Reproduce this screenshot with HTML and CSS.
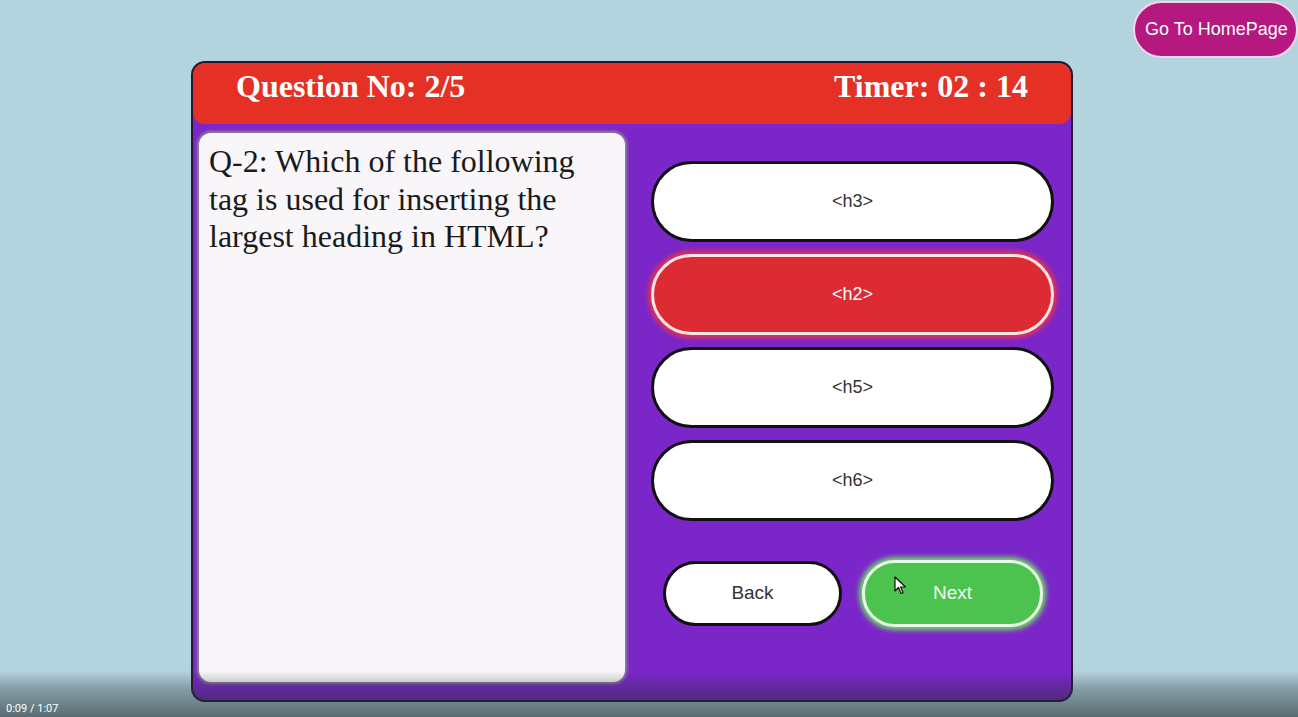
FILE: index.html
```html
<!DOCTYPE html>
<html>
<head>
<meta charset="utf-8">
<link rel="stylesheet" href="styles.css">
</head>
<body>
<div class="page">
  <div class="topbar">
    <button class="home-btn">Go To HomePage</button>
  </div>
  <div class="quiz">
    <div class="quiz-header">
      <span>Question No: 2/5</span>
      <span>Timer: 02 : 14</span>
    </div>
    <div class="quiz-body">
      <div class="question">Q-2: Which of the following tag is used for inserting the largest heading in HTML?</div>
      <div class="answers">
        <div class="options">
          <button class="option">&lt;h3&gt;</button>
          <button class="option selected">&lt;h2&gt;</button>
          <button class="option">&lt;h5&gt;</button>
          <button class="option">&lt;h6&gt;</button>
        </div>
        <div class="nav">
          <button class="nav-btn back">Back</button>
          <button class="nav-btn next">Next</button>
        </div>
      </div>
    </div>
  </div>
  <svg class="cursor" width="14" height="20" viewBox="0 0 14 20"><path d="M1 1 L1 15 L4.5 11.5 L7 17.5 L9 16.6 L6.6 11 L11.5 11 Z" fill="#fff" stroke="#111" stroke-width="1.2" stroke-linejoin="round"/></svg>
  <div class="player-shade"><span class="time">0:09 / 1:07</span></div>
</div>
</body>
</html>
```
FILE: styles.css
```css
* { box-sizing: border-box; }
html, body { margin: 0; padding: 0; }
body {
  width: 1298px;
  height: 717px;
  overflow: hidden;
  background: #b3d3de;
  font-family: "Liberation Sans", Arial, sans-serif;
}
.page {
  position: relative;
  width: 1298px;
  height: 717px;
}
.topbar {
  display: flex;
  justify-content: flex-end;
  height: 61px;
  padding-top: 1px;
  padding-right: 0;
}
.home-btn {
  width: 165px;
  height: 57px;
  border-radius: 29px;
  border: 2px solid #f3d6ea;
  background: #b5187f;
  color: #fff;
  font-family: "Liberation Sans", Arial, sans-serif;
  font-size: 18px;
  padding: 0 0 0 2px;
}
.quiz {
  margin-left: 191px;
  width: 882px;
  height: 641px;
  background: #7b26c9;
  border: 2px solid #231a2e;
  border-radius: 14px;
  overflow: hidden;
}
.quiz-header {
  height: 61px;
  background: #e53025;
  border-radius: 0 12px 12px 12px;
  display: flex;
  justify-content: space-between;
  align-items: center;
  padding: 0 43px 14px 43px;
  color: #fff;
  font-family: "Liberation Serif", "Times New Roman", serif;
  font-weight: bold;
  font-size: 32px;
}
.quiz-body {
  display: flex;
  padding: 9px 0 0 6px;
}
.question {
  width: 426px;
  height: 549px;
  background: #f8f6f9;
  border-radius: 12px;
  box-shadow: 0 0 3px 2px #8d8796;
  padding: 10px 10px;
  font-family: "Liberation Serif", "Times New Roman", serif;
  font-size: 32px;
  line-height: 37.5px;
  color: #1a1a1a;
}
.answers {
  padding: 28px 0 0 26px;
  display: flex;
  flex-direction: column;
}
.options {
  display: flex;
  flex-direction: column;
  gap: 12px;
}
.option {
  width: 403px;
  height: 81px;
  border-radius: 41px;
  border: 3px solid #111;
  background: #fff;
  color: #333;
  font-family: "Liberation Sans", Arial, sans-serif;
  font-size: 18px;
  padding: 0;
}
.option.selected {
  background: #dc2b33;
  color: #fff;
  border: 3px solid #fbe4e6;
  box-shadow: 0 0 5px 3px #e8334a;
}
.nav {
  display: flex;
  gap: 20px;
  padding: 40px 0 0 12px;
}
.nav-btn {
  width: 179px;
  height: 65px;
  border-radius: 33px;
  font-family: "Liberation Sans", Arial, sans-serif;
  font-size: 19px;
  padding: 0 0 2px 0;
}
.back {
  background: #fff;
  border: 3px solid #111;
  color: #333;
}
.next {
  width: 181px;
  height: 67px;
  margin-top: -1px;
  background: #4cc34e;
  border: 3px solid #e8f8e6;
  color: #f3fbef;
  box-shadow: 0 0 5px 3px #6fdc67;
}
.cursor {
  position: absolute;
  left: 894px;
  top: 576px;
}
.player-shade {
  position: absolute;
  left: 0;
  right: 0;
  bottom: 0;
  height: 46px;
  background: linear-gradient(to bottom, rgba(40,50,55,0) 0%, rgba(40,50,55,0.35) 40%, rgba(30,38,42,0.6) 100%);
}
.time {
  position: absolute;
  left: 6px;
  top: 31px;
  color: #fff;
  font-family: "Roboto", "Liberation Sans", sans-serif;
  font-size: 11px;
  line-height: 13px;
}
```
